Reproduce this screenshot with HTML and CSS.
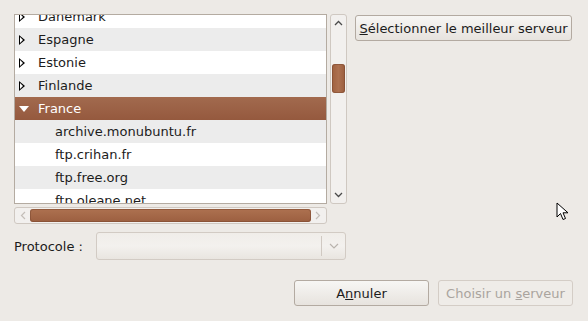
FILE: index.html
```html
<!DOCTYPE html>
<html lang="fr">
<head>
    <meta charset="UTF-8">
    <title>Choisir un serveur</title>
    <link rel="stylesheet" href="styles.css">
</head>
<body>
    <div class="dialog">
        <div class="top">
            <div class="list-area">
                <div class="list-row">
                    <div class="tree">
                        <div class="tree-inner">
                            <div class="row"><span class="exp"></span>Danemark</div>
                            <div class="row alt"><span class="exp"></span>Espagne</div>
                            <div class="row"><span class="exp"></span>Estonie</div>
                            <div class="row alt"><span class="exp"></span>Finlande</div>
                            <div class="row selected"><span class="exp open"></span>France</div>
                            <div class="row alt child">archive.monubuntu.fr</div>
                            <div class="row child">ftp.crihan.fr</div>
                            <div class="row alt child">ftp.free.org</div>
                            <div class="row child">ftp.oleane.net</div>
                        </div>
                    </div>
                    <div class="vscroll">
                        <svg class="arrow" width="9" height="6" viewBox="0 0 9 6"><path d="M1 5 L4.5 1.5 L8 5" fill="none" stroke="#4a4a4a" stroke-width="1.3"/></svg>
                        <div class="vtrack"><div class="vthumb"></div></div>
                        <svg class="arrow" width="9" height="6" viewBox="0 0 9 6"><path d="M1 1 L4.5 4.5 L8 1" fill="none" stroke="#4a4a4a" stroke-width="1.3"/></svg>
                    </div>
                </div>
                <div class="hscroll">
                    <svg class="harrow" width="6" height="9" viewBox="0 0 6 9"><path d="M5 1 L1.5 4.5 L5 8" fill="none" stroke="#c4beb8" stroke-width="1.2"/></svg>
                    <div class="hthumb"></div>
                    <svg class="harrow" width="6" height="9" viewBox="0 0 6 9"><path d="M1 1 L4.5 4.5 L1 8" fill="none" stroke="#c4beb8" stroke-width="1.2"/></svg>
                </div>
            </div>
            <button class="btn best"><u>S</u>électionner le meilleur serveur</button>
        </div>

        <div class="proto">
            <span class="proto-label">Protocole :</span>
            <div class="combo">
                <div class="combo-sep"></div>
                <svg width="10" height="6" viewBox="0 0 10 6"><path d="M1 1 L5 5 L9 1" fill="none" stroke="#b9b3ad" stroke-width="1.2"/></svg>
            </div>
        </div>

        <div class="actions">
            <button class="btn">A<u>n</u>nuler</button>
            <button class="btn disabled">Choisir un <u>s</u>erveur</button>
        </div>

        <svg class="cursor" width="14" height="20" viewBox="0 0 14 20"><path d="M1 1 L1 15 L4.5 11.5 L7 17.5 L9.5 16.5 L7 10.8 L12 10.8 Z" fill="#fff" stroke="#000" stroke-width="1"/></svg>
    </div>
</body>
</html>
```

FILE: styles.css
```css
:root {
    --bg: #edeae6;
    --border: #b4aba1;
    --brown: #9c6246;
    --text: #1c1c1c;
}

body {
    margin: 0;
    background: var(--bg);
    font-family: "DejaVu Sans", sans-serif;
    font-size: 13px;
    color: var(--text);
}

.dialog {
    position: relative;
    width: 588px;
    height: 321px;
    padding: 14px 0 0 14px;
    box-sizing: border-box;
}

.top {
    display: flex;
    gap: 8px;
    align-items: flex-start;
}

.list-row {
    display: flex;
    gap: 3px;
}

.tree {
    width: 311px;
    height: 188px;
    border: 1px solid var(--border);
    background: #fff;
    overflow: hidden;
}

.tree-inner {
    margin-top: -10px;
}

.row {
    height: 23px;
    line-height: 23px;
    padding-left: 4px;
    display: flex;
    align-items: center;
    white-space: nowrap;
}

.row.alt {
    background: #ececec;
}

.row.child {
    padding-left: 40px;
}

.row.selected {
    background: linear-gradient(#a26a4e, #95593e);
    color: #fff;
}

.exp {
    width: 0;
    height: 0;
    border-top: 5px solid transparent;
    border-bottom: 5px solid transparent;
    border-left: 6px solid #000;
    margin: 0 13px 0 0;
    position: relative;
}

.exp::after {
    content: "";
    position: absolute;
    left: -5px;
    top: -3px;
    border-top: 3px solid transparent;
    border-bottom: 3px solid transparent;
    border-left: 3.5px solid #fff;
}

.exp.open {
    border-left: 5px solid transparent;
    border-right: 5px solid transparent;
    border-top: 6px solid #fff;
    border-bottom: 0;
    margin: 0 9px 0 0;
}

.exp.open::after {
    display: none;
}

.vscroll {
    width: 15px;
    height: 178px;
    border: 1px solid #cfc8c1;
    border-radius: 3px;
    background: #f2f0ee;
    display: flex;
    flex-direction: column;
    align-items: center;
    padding: 5px 0;
}

.vtrack {
    flex: 1;
    width: 100%;
    padding-top: 38px;
    box-sizing: border-box;
    display: flex;
    justify-content: center;
}

.vthumb {
    width: 13px;
    height: 29px;
    border-radius: 3px;
    background: linear-gradient(90deg, #a0613f, #ad7150 50%, #9a5c3c);
    box-shadow: inset 0 0 0 1px rgba(120, 70, 45, 0.5);
}

.hscroll {
    width: 301px;
    height: 15px;
    margin-top: 3px;
    border: 1px solid #cfc8c1;
    border-radius: 3px;
    background: #f2f0ee;
    display: flex;
    align-items: center;
    padding: 0 5px;
    gap: 4px;
}

.hthumb {
    flex: 1;
    height: 13px;
    border-radius: 3px;
    background: linear-gradient(#ad7150, #9c5f40);
    box-shadow: inset 0 0 0 1px rgba(120, 70, 45, 0.5);
}

.harrow {
    flex: none;
}

.btn {
    font-family: "DejaVu Sans", sans-serif;
    font-size: 13px;
    color: var(--text);
    height: 26px;
    border: 1px solid #b3aaa1;
    border-radius: 3px;
    background: linear-gradient(#f7f6f4, #e7e3de);
    padding: 0 4px;
    white-space: nowrap;
    cursor: default;
}

.btn.best {
    margin-top: 1px;
    width: 217px;
    padding: 0;
}

.btn.disabled {
    color: #aaa49e;
    border-color: #d4cdc6;
    background: #efece8;
}

.proto {
    display: flex;
    align-items: center;
    margin-top: 8px;
}

.proto-label {
    width: 82px;
}

.combo {
    width: 248px;
    height: 26px;
    border: 1px solid #d2cbc4;
    border-radius: 3px;
    background: linear-gradient(#f0ede9, #f3f1ee 50%, #e9e5e0);
    display: flex;
    align-items: center;
    justify-content: flex-end;
}

.combo-sep {
    width: 1px;
    height: 20px;
    background: #d0c9c2;
    margin-right: 7px;
}

.combo svg {
    margin-right: 6px;
}

.actions {
    display: flex;
    justify-content: flex-end;
    gap: 9px;
    margin: 20px 15px 0 0;
}

.actions .btn {
    width: 135px;
}

.cursor {
    position: absolute;
    left: 556px;
    top: 202px;
}
```
